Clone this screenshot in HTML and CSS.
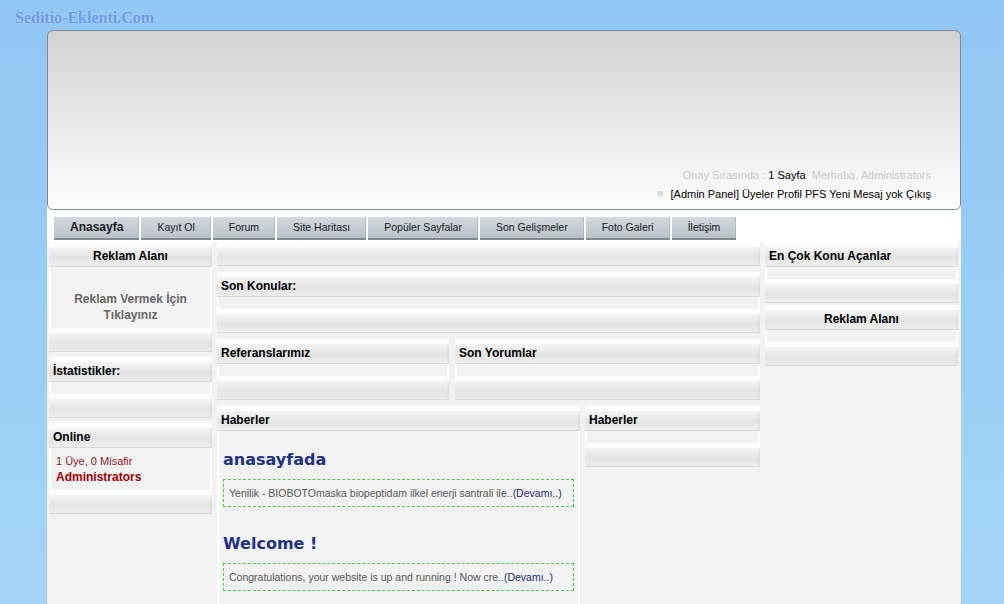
FILE: index.html
```html
<!DOCTYPE html>
<html lang="tr">
<head>
    <meta charset="UTF-8">
    <title>Seditio-Eklenti.Com</title>
    <link rel="stylesheet" href="styles.css">
</head>
<body>
    <div class="logo">Seditio-Eklenti.Com</div>

    <div class="page">
        <div class="header">
            <div class="userbar">
                <p class="status">Onay Sırasında : <a href="#" class="count">1 Sayfa</a>&nbsp; Merhaba, Administrators</p>
                <p class="links">
                    <span class="bullet"></span>
                    <a href="#">[Admin Panel]</a>
                    <a href="#">Üyeler</a>
                    <a href="#">Profil</a>
                    <a href="#">PFS</a>
                    <a href="#">Yeni Mesaj yok</a>
                    <a href="#">Çıkış</a>
                </p>
            </div>
        </div>

        <nav class="menu">
            <a href="#" class="tab active">Anasayfa</a>
            <a href="#" class="tab">Kayıt Ol</a>
            <a href="#" class="tab">Forum</a>
            <a href="#" class="tab">Site Haritası</a>
            <a href="#" class="tab">Popüler Sayfalar</a>
            <a href="#" class="tab">Son Gelişmeler</a>
            <a href="#" class="tab">Foto Galeri</a>
            <a href="#" class="tab">İletişim</a>
        </nav>

        <div class="content">
            <!-- left column -->
            <aside class="col-left">
                <div class="box">
                    <div class="box-head center">Reklam Alanı</div>
                    <div class="box-body ad">
                        <a href="#">Reklam Vermek İçin<br>Tıklayınız</a>
                    </div>
                    <div class="box-foot"></div>
                </div>
                <div class="box">
                    <div class="box-head">İstatistikler:</div>
                    <div class="box-body"></div>
                    <div class="box-foot"></div>
                </div>
                <div class="box">
                    <div class="box-head">Online</div>
                    <div class="box-body online">
                        <div class="guests">1 Üye, 0 Misafir</div>
                        <a href="#" class="admin">Administrators</a>
                    </div>
                    <div class="box-foot"></div>
                </div>
            </aside>

            <!-- middle column -->
            <main class="col-main">
                <div class="bar"></div>
                <div class="box">
                    <div class="box-head">Son Konular:</div>
                    <div class="box-body"></div>
                    <div class="box-foot"></div>
                </div>
                <div class="row">
                    <div class="box refs">
                        <div class="box-head">Referanslarımız</div>
                        <div class="box-body"></div>
                        <div class="box-foot"></div>
                    </div>
                    <div class="box comments">
                        <div class="box-head">Son Yorumlar</div>
                        <div class="box-body"></div>
                        <div class="box-foot"></div>
                    </div>
                </div>
                <div class="row">
                    <div class="box news">
                        <div class="box-head">Haberler</div>
                        <div class="box-body news-body">
                            <h2><a href="#">anasayfada</a></h2>
                            <div class="summary">Yenilik - BIOBOTOmaska biopeptidam ilkel enerji santrali ile..<a href="#">(Devamı..)</a></div>
                            <h2><a href="#">Welcome !</a></h2>
                            <div class="summary">Congratulations, your website is up and running ! Now cre..<a href="#">(Devamı..)</a></div>
                        </div>
                    </div>
                    <div class="box news-side">
                        <div class="box-head">Haberler</div>
                        <div class="box-body"></div>
                        <div class="box-foot"></div>
                    </div>
                </div>
            </main>

            <!-- right column -->
            <aside class="col-right">
                <div class="box">
                    <div class="box-head">En Çok Konu Açanlar</div>
                    <div class="box-body"></div>
                    <div class="box-foot"></div>
                </div>
                <div class="box">
                    <div class="box-head center">Reklam Alanı</div>
                    <div class="box-body"></div>
                    <div class="box-foot"></div>
                </div>
            </aside>
        </div>
    </div>
</body>
</html>
```

FILE: styles.css
```css
* {
    margin: 0;
    padding: 0;
    box-sizing: border-box;
}

body {
    font-family: 'Liberation Sans', Arial, sans-serif;
    font-size: 11px;
    color: #000;
    min-height: 100vh;
    background: linear-gradient(to bottom, #91c7f3, #a4d4f7);
    overflow: hidden;
}

a {
    color: inherit;
    text-decoration: none;
}

.logo {
    height: 30px;
    padding: 9px 0 0 15px;
    font-family: 'Liberation Serif', 'Times New Roman', serif;
    font-size: 16px;
    font-weight: bold;
    line-height: 18px;
    color: #6f99ea;
    text-shadow: 0 0 2px rgba(255, 255, 255, 0.4);
}

.page {
    width: 914px;
    margin-left: 47px;
    background: linear-gradient(to bottom, transparent 20px, #fff 20px);
}

/* header */
.header {
    height: 180px;
    border: 1px solid #7d8b98;
    border-radius: 6px;
    background: linear-gradient(to bottom, #d3d3d3, #fdfdfd);
    display: flex;
    justify-content: flex-end;
    align-items: flex-end;
    padding: 0 29px 5px 0;
}

.userbar {
    text-align: right;
    line-height: 19px;
}

.status {
    color: #c9c9c9;
}

.status .count {
    color: #000;
}

.bullet {
    display: inline-block;
    width: 5px;
    height: 5px;
    margin-right: 4px;
    vertical-align: 2px;
    background-color: #d8d8d8;
}

/* menu */
.menu {
    display: flex;
    gap: 2px;
    padding: 7px 0 2px 7px;
    background-color: #fff;
}

.tab {
    height: 23px;
    line-height: 21px;
    padding: 0 16px;
    font-size: 10.5px;
    color: #1a1a1a;
    background: linear-gradient(to bottom, #d3dadf, #c2cbd0 60%, #b8c2c7);
    border-bottom: 2px solid #7f8a90;
    box-shadow: inset -1px 0 0 #aeb8bd;
}

.tab.active {
    font-weight: bold;
    font-size: 12px;
}

/* columns */
.content {
    display: flex;
    gap: 5px;
    min-height: 370px;
    padding: 0 3px 0 2px;
    background-color: #f2f2f2;
}

.col-left {
    width: 163px;
}

.col-main {
    width: 543px;
}

.col-right {
    width: 193px;
}

.row {
    display: flex;
    gap: 6px;
}

.refs {
    width: 232px;
}

.comments {
    flex: 1;
}

.news {
    width: 363px;
    margin-right: -1px;
}

.news-side {
    flex: 1;
}

/* boxes */
.box {
    margin-bottom: 6px;
}

.col-left .box {
    margin-bottom: 5px;
}

.col-right .box {
    margin-bottom: 2px;
}

.box-head,
.box-foot,
.bar {
    border-top: 5px solid #fff;
    border-bottom: 1px solid #d9d9d9;
    background: linear-gradient(to bottom, #f6f6f6, #e4e4e4 55%, #ededed);
    box-shadow: inset -3px 0 3px -2px rgba(0, 0, 0, 0.08);
}

.box-head {
    height: 25px;
    line-height: 19px;
    padding: 0 4px;
    font-size: 12px;
    font-weight: bold;
}

.box-head.center {
    text-align: center;
}

.box-foot,
.bar {
    height: 24px;
}

.bar {
    margin-bottom: 6px;
}

.box-body {
    min-height: 12px;
    border-left: 2px solid #fff;
    border-right: 2px solid #fff;
}

.ad {
    height: 61px;
    padding-top: 24px;
    text-align: center;
    font-size: 12px;
    font-weight: bold;
    line-height: 16px;
    color: #666;
}

.online {
    padding: 5px 5px;
    line-height: 16px;
}

.guests {
    color: #8a1b1b;
}

.admin {
    font-size: 12px;
    font-weight: bold;
    color: #a30000;
}

/* news */
.news-body {
    min-height: 180px;
    padding: 18px 4px 0 3px;
    border-left-width: 3px;
}

.news-body h2 {
    font-family: 'DejaVu Sans', Verdana, sans-serif;
    font-size: 16px;
    line-height: 22px;
    color: #1f3384;
    margin-bottom: 8px;
}

.summary {
    border: 1px dashed #4ccb4c;
    padding: 6px 5px;
    font-size: 10.5px;
    line-height: 14px;
    white-space: nowrap;
    color: #555;
    margin-bottom: 26px;
}

.summary a {
    color: #1c2a78;
}
```
